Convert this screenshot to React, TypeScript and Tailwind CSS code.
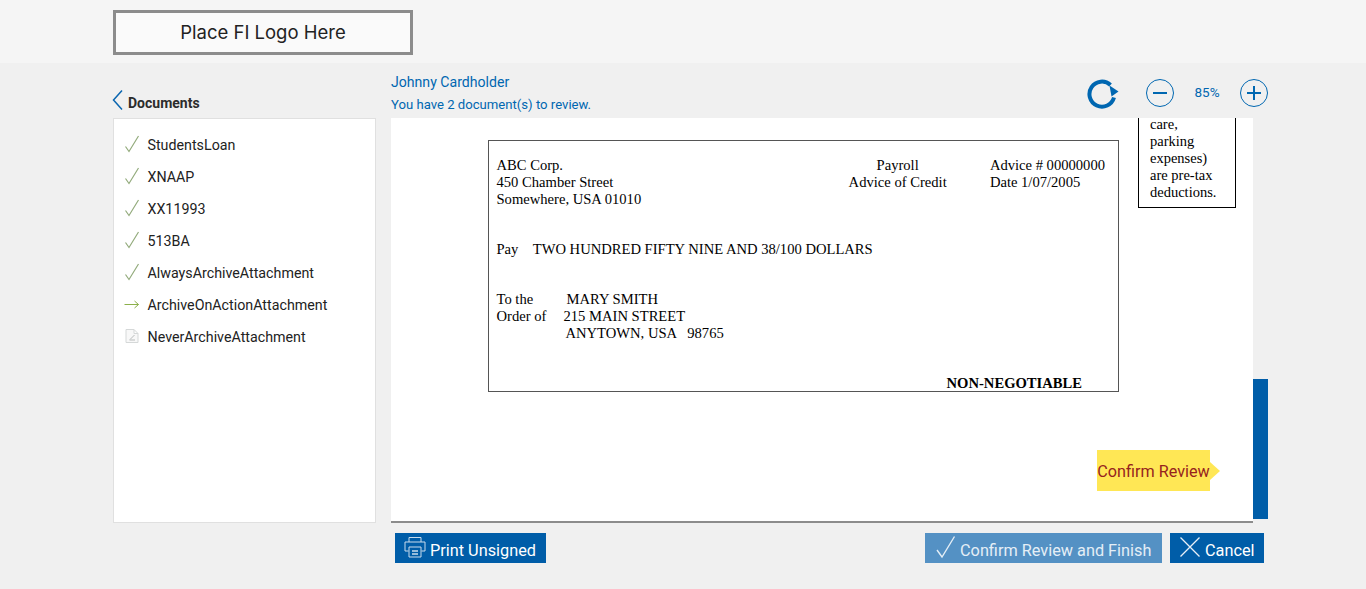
import React from 'react';

const docs = [
  { name: 'StudentsLoan', status: 'done' },
  { name: 'XNAAP', status: 'done' },
  { name: 'XX11993', status: 'done' },
  { name: '513BA', status: 'done' },
  { name: 'AlwaysArchiveAttachment', status: 'done' },
  { name: 'ArchiveOnActionAttachment', status: 'current' },
  { name: 'NeverArchiveAttachment', status: 'todo' },
];

const StatusIcon = ({ status }: { status: string }) => {
  if (status === 'done') {
    return (
      <svg width="16" height="18" viewBox="0 0 16 18" fill="none">
        <path d="M1.5 11.5 L5 16.5 L14.5 1" stroke="#93ab7c" strokeWidth="1.2" />
      </svg>
    );
  }
  if (status === 'current') {
    return (
      <svg width="16" height="18" viewBox="0 0 16 18" fill="none">
        <path d="M0.5 9.5 H14.5 M10.5 6 L14.5 9.5 L10.5 13" stroke="#8cb04a" strokeWidth="1" />
      </svg>
    );
  }
  return (
    <svg width="16" height="18" viewBox="0 0 16 18" fill="none">
      <path d="M2 2.5 H10 L14 6.5 V15.5 H2 Z M10 2.5 V6.5 H14" stroke="#d5d8d8" strokeWidth="1" fill="#f8f8f8" />
      <path d="M6 12.5 L10.5 8 M5.5 13 H11" stroke="#b9bcbc" strokeWidth="1" />
    </svg>
  );
};

const App: React.FC = () => {
  return (
    <div className="min-h-screen bg-[#f0f0f0] font-['Roboto',sans-serif] text-[#222]">
      <header className="h-[63px] bg-[#f5f5f5] pl-[113px] pt-[10px]">
        <div className="flex h-[45px] w-[300px] items-center justify-center border-[3px] border-[#8c8c8c] bg-[#fafafa] font-['Inter',sans-serif] text-[18.5px] text-[#222]">
          Place FI Logo Here
        </div>
      </header>

      <div className="flex pl-[113px]">
        {/* Documents list */}
        <aside className="w-[263px]">
          <div className="flex h-[55px] items-end pb-[6px]">
            <svg width="11" height="22" viewBox="0 0 11 22" fill="none" className="mb-[1px] -ml-[1px]">
              <path d="M10 1.5 L1.5 11 L10 20.5" stroke="#0a66b0" strokeWidth="1.5" />
            </svg>
            <span className="ml-[5px] text-[14px] font-bold leading-[18px] text-[#2c2c2c]">Documents</span>
          </div>
          <ul className="h-[405px] border border-[#e0e0e0] bg-white pt-[10px]">
            {docs.map((d) => (
              <li key={d.name} className="flex h-[32px] items-center pl-[10px]">
                <span className="mb-[2px] w-[23.5px] shrink-0">
                  <StatusIcon status={d.status} />
                </span>
                <span className="pt-[2px] text-[14.25px] text-[#222]">{d.name}</span>
              </li>
            ))}
          </ul>
        </aside>

        {/* Viewer */}
        <main className="ml-[15px] w-[877px]">
          <div className="flex h-[55px] items-start justify-between">
            <div className="text-[#0067b1]">
              <div className="mt-[9px] text-[14.1px] leading-[20px]">Johnny Cardholder</div>
              <div className="mt-[3px] text-[13.13px] leading-[20px]">You have 2 document(s) to review.</div>
            </div>
            <div className="-mr-[1px] mt-[14px] flex items-center">
              <svg width="33" height="32" viewBox="0 0 33 32" fill="none">
                <path d="M24.5 8 A12.5 12.5 0 1 0 28 20.5" stroke="#0067b1" strokeWidth="4" />
                <path d="M23.5 8.5 L32.5 14.5 L25.5 19.5 Z" fill="#0067b1" />
              </svg>
              <svg width="30" height="30" viewBox="0 0 30 30" fill="none" className="ml-[26px]">
                <circle cx="15" cy="15" r="13.5" stroke="#0067b1" />
                <path d="M8 15 H22" stroke="#0067b1" strokeWidth="2" />
              </svg>
              <span className="mb-[2px] w-[64px] text-center text-[13.5px] text-[#0067b1]">85%</span>
              <svg width="30" height="30" viewBox="0 0 30 30" fill="none">
                <circle cx="15" cy="15" r="13.5" stroke="#0067b1" />
                <path d="M8 15 H22 M15 8 V22" stroke="#0067b1" strokeWidth="2" />
              </svg>
            </div>
          </div>

          <div className="flex">
            <div className="relative h-[405px] w-[862px] border-b-2 border-[#8c8c8c] bg-white">
              <div className="flex font-['Liberation_Serif',serif] text-[14.6px] leading-[17px] text-black">
                <div className="ml-[97px] mt-[22px] h-[252px] w-[631px] border border-[#555] pl-[7.5px] pr-[13px]">
                  <div className="mt-[16px] flex h-[50px]">
                    <div className="w-[330px]">
                      ABC Corp.
                      <br />
                      450 Chamber Street
                      <br />
                      Somewhere, USA 01010
                    </div>
                    <div className="ml-[13px] w-[120px] text-center">
                      Payroll
                      <br />
                      Advice of Credit
                    </div>
                    <div className="ml-[32.5px] whitespace-nowrap">
                      Advice # 00000000
                      <br />
                      Date 1/07/2005
                    </div>
                  </div>
                  <div className="mt-[34px] whitespace-pre">Pay    TWO HUNDRED FIFTY NINE AND 38/100 DOLLARS</div>
                  <div className="mt-[33px] flex">
                    <div className="w-[67px]">
                      To the
                      <br />
                      Order of
                    </div>
                    <div>
                      <div className="ml-[3px]">MARY SMITH</div>
                      <div>215 MAIN STREET</div>
                      <div className="ml-[2px] whitespace-pre">ANYTOWN, USA   98765</div>
                    </div>
                  </div>
                  <div className="mt-[33px] pr-[23px] text-right font-bold">NON-NEGOTIABLE</div>
                </div>
                <div className="ml-[19px] h-[90px] w-[98px] border-x border-b border-black pl-[11px]">
                  <div className="-mt-[2px] text-[14.5px]">
                    care,
                    <br />
                    parking
                    <br />
                    expenses)
                    <br />
                    are pre-tax
                    <br />
                    deductions.
                  </div>
                </div>
              </div>

              <div className="absolute right-[33px] top-[332px] flex items-center">
                <div className="flex h-[41px] w-[113px] items-center justify-center whitespace-nowrap bg-[#ffe755] pt-[3px] text-[16.2px] text-[#96231e]">
                  Confirm Review
                </div>
                <div className="h-0 w-0 border-y-[9px] border-l-[10px] border-y-transparent border-l-[#ffe755]" />
              </div>
            </div>
            <div className="h-[401px] w-[15px]">
              <div className="mt-[261px] h-[140px] bg-[#005da8]" />
            </div>
          </div>

          <div className="mt-[10px] flex justify-between pl-[4px] pr-[4px]">
            <button className="flex h-[30px] w-[151px] items-center bg-[#005da8] pl-[9px] text-[16.3px] text-white">
              <svg width="22" height="22" viewBox="0 0 22 22" fill="none" stroke="#c8dcec" strokeWidth="1" className="mb-[3px]">
                <path d="M5 6 V1.5 H17 V6" />
                <path d="M4.5 15 H1 V6 H21 V15 H17.5" />
                <path d="M5 11 H17 V21 H5 Z" />
                <path d="M8 15 H14 M8 18 H14" strokeWidth="1.5" />
              </svg>
              <span className="ml-[4px] pt-[7px]">Print Unsigned</span>
            </button>
            <div className="flex gap-[8px]">
              <button className="flex h-[30px] w-[237px] items-center bg-[#5491c4] pl-[11px] text-[16.3px] text-[#e4eef6]">
                <svg width="20" height="24" viewBox="0 0 20 24" fill="none" className="mb-[3px]">
                  <path d="M1 15 L6 22 L18.5 1.5" stroke="#e4eef6" strokeWidth="1.4" />
                </svg>
                <span className="ml-[4px] pt-[7px]">Confirm Review and Finish</span>
              </button>
              <button className="flex h-[30px] w-[94px] items-center bg-[#005da8] pl-[10px] text-[16.3px] text-white">
                <svg width="20" height="20" viewBox="0 0 20 20" fill="none" className="mb-[3px]">
                  <path d="M0.5 0.5 L19.5 19.5 M19.5 0.5 L0.5 19.5" stroke="#e8f0f7" strokeWidth="1.3" />
                </svg>
                <span className="ml-[5px] pt-[7px]">Cancel</span>
              </button>
            </div>
          </div>
        </main>
      </div>
    </div>
  );
};

export default App;
